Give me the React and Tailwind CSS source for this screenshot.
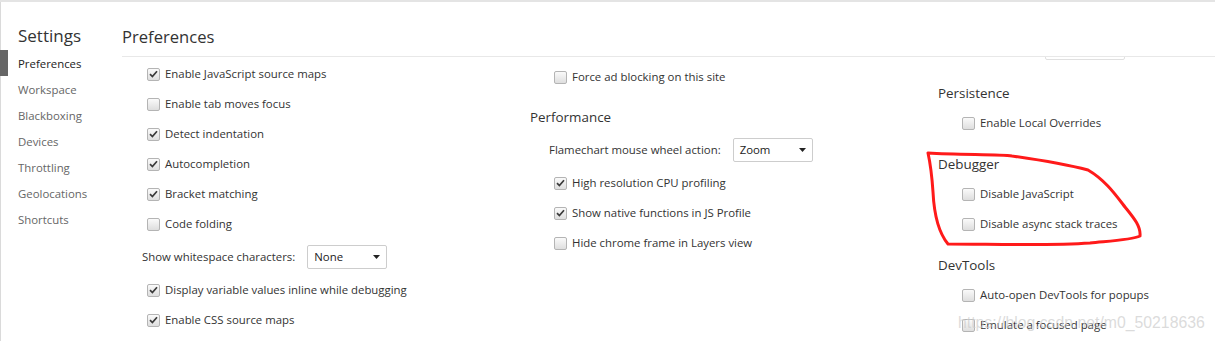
const font = { fontFamily: '"Segoe UI", "Open Sans", sans-serif' };

const sidebarItems = [
  "Preferences",
  "Workspace",
  "Blackboxing",
  "Devices",
  "Throttling",
  "Geolocations",
  "Shortcuts",
];

function Checkbox({ checked }) {
  return (
    <span className="relative w-[13px] h-[13px] rounded-[2px] border border-[#b4b4b4] bg-gradient-to-b from-[#fafafa] to-[#dedede] shrink-0 flex items-center justify-center">
      {checked && (
        <svg width="9" height="8" viewBox="0 0 9 8">
          <path d="M1 4.2 L3.4 6.6 L8 1.2" fill="none" stroke="#3a3a3a" strokeWidth="1.7" />
        </svg>
      )}
    </span>
  );
}

function Row({ label, checked }) {
  return (
    <div className="h-[30px] flex items-center gap-[5px] pl-6 text-[11.4px] text-[#333]">
      <Checkbox checked={checked} />
      <span>{label}</span>
    </div>
  );
}

function Select({ value }) {
  return (
    <div className="w-[80px] h-[24px] border border-[#cdcdcd] rounded-[2px] flex items-center justify-between pl-[6px] pr-[6px] text-[11.4px] text-[#222] bg-white">
      <span>{value}</span>
      <svg width="7" height="4" viewBox="0 0 7 4">
        <path d="M0 0 L7 0 L3.5 4 Z" fill="#222" />
      </svg>
    </div>
  );
}

function SelectRow({ label, value }) {
  return (
    <div className="h-[36px] flex items-center gap-[12px] pl-[19px] text-[11.4px] text-[#333]">
      <span>{label}</span>
      <Select value={value} />
    </div>
  );
}

function SectionTitle({ children }) {
  return <div className="h-[20px] flex items-center text-[13.4px] text-[#333] mb-[5px]">{children}</div>;
}

export default function App() {
  return (
    <div className="relative w-[1215px] h-[341px] overflow-hidden bg-white border-t-2 border-[#e4e4e4]" style={font}>
      <div className="flex h-full border-l border-[#dadada]">
        <div className="w-[121px] shrink-0 pl-[17px] pt-[22px]">
          <div className="text-[17px] text-[#333] leading-[24px]">Settings</div>
          <div className="mt-[3px] flex flex-col">
            {sidebarItems.map((item, i) => (
              <div
                key={item}
                className={
                  "relative h-[26px] flex items-center text-[11.4px] " +
                  (i === 0 ? "text-[#222]" : "text-[#666]")
                }
              >
                {i === 0 && <span className="absolute -left-[18px] -top-px w-[8px] h-[26px] bg-[#666]" />}
                {item}
              </div>
            ))}
          </div>
        </div>

        <div className="flex-1 flex flex-col min-w-0">
          <div className="h-[55px] shrink-0 flex items-center pl-0 pt-[17px] text-[16.6px] text-[#333] border-b border-[#e8e8e8]">
            Preferences
          </div>
          <div className="flex-1 flex overflow-hidden">
            <div className="w-[408px] shrink-0 pt-[2px] pl-px">
              <Row label="Enable JavaScript source maps" checked />
              <Row label="Enable tab moves focus" />
              <Row label="Detect indentation" checked />
              <Row label="Autocompletion" checked />
              <Row label="Bracket matching" checked />
              <Row label="Code folding" />
              <SelectRow label="Show whitespace characters:" value="None" />
              <Row label="Display variable values inline while debugging" checked />
              <Row label="Enable CSS source maps" checked />
            </div>

            <div className="w-[408px] shrink-0 pt-[5px]">
              <Row label="Force ad blocking on this site" />
              <div className="mt-[15px]">
                <SectionTitle>Performance</SectionTitle>
                <SelectRow label="Flamechart mouse wheel action:" value="Zoom" />
                <Row label="High resolution CPU profiling" checked />
                <Row label="Show native functions in JS Profile" checked />
                <Row label="Hide chrome frame in Layers view" />
              </div>
            </div>

            <div className="flex-1 min-w-0">
              <div className="h-[3px] overflow-hidden relative">
                <div className="absolute left-[107px] bottom-0 w-[80px] h-[24px] border border-[#e0e0e0] rounded-[2px]" />
              </div>
              <div className="mt-[23px]">
                <SectionTitle>Persistence</SectionTitle>
                <Row label="Enable Local Overrides" />
              </div>
              <div className="mt-[16px]">
                <SectionTitle>Debugger</SectionTitle>
                <Row label="Disable JavaScript" />
                <Row label="Disable async stack traces" />
              </div>
              <div className="mt-[16px]">
                <SectionTitle>DevTools</SectionTitle>
                <Row label="Auto-open DevTools for popups" />
                <Row label="Emulate a focused page" />
              </div>
            </div>
          </div>
        </div>
      </div>

      <svg className="absolute left-0 top-0 pointer-events-none" width="1215" height="341">
        <path
          d="M928 151 C 960 153, 1000 152, 1012 154 C 1040 158, 1065 162, 1088 168 C 1105 178, 1115 192, 1125 205 C 1133 215, 1141 224, 1140 234 C 1132 238, 1110 239, 1090 241 C 1050 244, 990 242, 948 242 C 938 230, 934 210, 933 190 C 932 175, 930 160, 928 151 Z"
          fill="none"
          stroke="#ff1a1a"
          strokeWidth="3"
          strokeLinejoin="round"
        />
      </svg>

      <div className="absolute left-[958px] top-[309px] text-[15.8px] text-[#cccccc]/70 pointer-events-none whitespace-nowrap" style={{ fontFamily: '"Liberation Sans", Arial, sans-serif' }}>
        https://blog.csdn.net/m0_50218636
      </div>
    </div>
  );
}
